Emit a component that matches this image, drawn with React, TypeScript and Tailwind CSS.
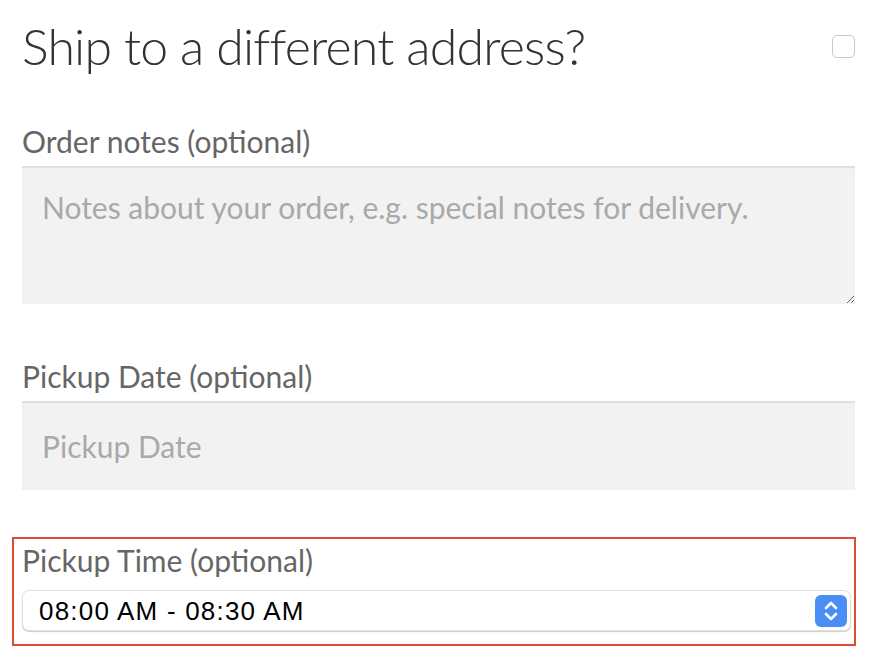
import React from 'react';

const Stepper = () => (
  <div className="w-[32px] h-[32px] rounded-[6px] bg-[#4a8ef5] flex items-center justify-center">
    <svg width="18" height="24" viewBox="0 0 18 24" fill="none" stroke="white" strokeWidth="2.6" strokeLinecap="round" strokeLinejoin="round">
      <path d="M4 9 L9 4 L14 9" />
      <path d="M4 15 L9 20 L14 15" />
    </svg>
  </div>
);

export default function App() {
  return (
    <div className="w-[872px] h-[658px] bg-white overflow-hidden font-['Lato',sans-serif]">
      {/* Heading */}
      <div className="flex items-start justify-between pl-[22px] pr-[17px] pt-[21px]">
        <h3 className="text-[50px] leading-none font-light text-[#333] tracking-[-0.8px]">
          Ship to a different address?
        </h3>
        <div className="mt-[14px] w-[23px] h-[23px] rounded-[5px] border border-[#c8c8c8] bg-white" />
      </div>

      {/* Order notes */}
      <div className="px-[22px] pr-[17px] mt-[55px]">
        <label className="block text-[30px] leading-none text-[#666]">Order notes (optional)</label>
        <textarea
          placeholder="Notes about your order, e.g. special notes for delivery."
          className="block mt-[10px] w-full h-[138px] bg-[#f2f2f2] pt-[25px] px-[20px] text-[30px] leading-[32px] text-[#555] placeholder:text-[#a9a9a9] shadow-[inset_0_2px_1px_rgba(0,0,0,0.08)] outline-none"
        />
      </div>

      {/* Pickup date */}
      <div className="px-[22px] pr-[17px] mt-[57px]">
        <label className="block text-[30px] leading-none text-[#666]">Pickup Date (optional)</label>
        <input
          type="text"
          placeholder="Pickup Date"
          className="block mt-[10px] w-full h-[89px] bg-[#f2f2f2] px-[20px] text-[30px] text-[#555] placeholder:text-[#a9a9a9] shadow-[inset_0_2px_1px_rgba(0,0,0,0.08)] outline-none"
        />
      </div>

      {/* Pickup time (highlighted) */}
      <div className="ml-[12px] mr-[16px] mt-[47px] h-[109px] border-2 border-[#df4a32] pl-[8px] pr-[3px] pt-[6px]">
        <label className="block text-[30px] leading-none text-[#666]">Pickup Time (optional)</label>
        <div className="mt-[15px] h-[41px] rounded-[7px] border border-[#e0e0e0] bg-white shadow-[0_1px_1px_rgba(0,0,0,0.2)] flex items-center justify-between pl-[16px] pr-[3px]">
          <span className="font-['Liberation_Sans',sans-serif] text-[26px] leading-none text-black tracking-[1.2px]">
            08:00 AM - 08:30 AM
          </span>
          <Stepper />
        </div>
      </div>
    </div>
  );
}
